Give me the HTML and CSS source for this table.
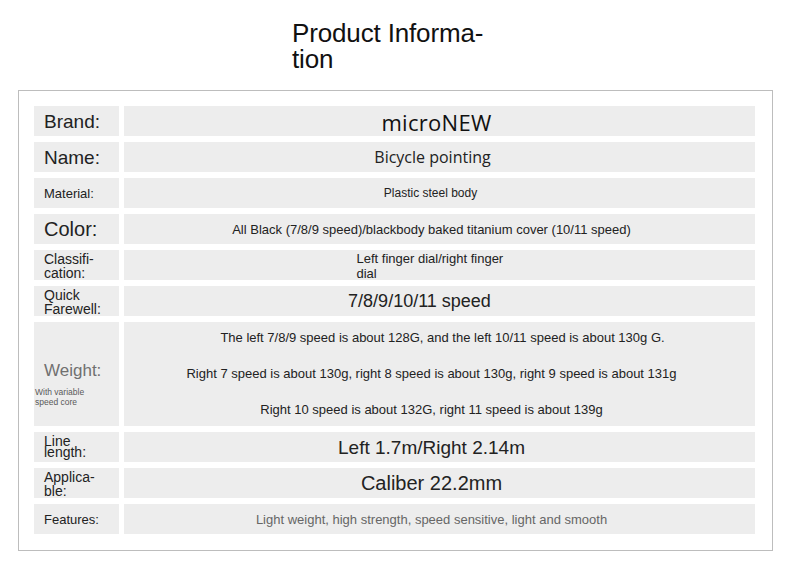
FILE: index.html
```html
<!DOCTYPE html>
<html>
<head>
<meta charset="utf-8">
<link rel="stylesheet" href="styles.css">
</head>
<body>
<h1 class="title">Product Informa-<br>tion</h1>
<div class="box">
  <div class="grid">
    <div class="lab lab-xl">Brand:</div>
    <div class="val val-brand">microNEW</div>

    <div class="lab lab-xl">Name:</div>
    <div class="val val-name">Bicycle pointing</div>

    <div class="lab lab-s">Material:</div>
    <div class="val val-xs">Plastic steel body</div>

    <div class="lab lab-xxl">Color:</div>
    <div class="val val-s">All Black (7/8/9 speed)/blackbody baked titanium cover (10/11 speed)</div>

    <div class="lab lab-m">Classifi-<br>cation:</div>
    <div class="val val-top"><div class="narrow">Left finger dial/right finger dial</div></div>

    <div class="lab lab-m">Quick<br>Farewell:</div>
    <div class="val val-l val-quick">7/8/9/10/11 speed</div>

    <div class="lab lab-weight">
      <div class="weight-main">Weight:</div>
      <div class="weight-sub">With variable<br>speed core</div>
    </div>
    <div class="val val-weight">
      <div class="w-first">The left 7/8/9 speed is about 128G, and the left 10/11 speed is about 130g G.</div>
      <div>Right 7 speed is about 130g, right 8 speed is about 130g, right 9 speed is about 131g</div>
      <div>Right 10 speed is about 132G, right 11 speed is about 139g</div>
    </div>

    <div class="lab lab-m lab-tight">Line<br>length:</div>
    <div class="val val-line">Left 1.7m/Right 2.14m</div>

    <div class="lab lab-m">Applica-<br>ble:</div>
    <div class="val val-xl">Caliber 22.2mm</div>

    <div class="lab lab-s lab-mid">Features:</div>
    <div class="val val-s val-gray">Light weight, high strength, speed sensitive, light and smooth</div>
  </div>
</div>
</body>
</html>
```
FILE: styles.css
```css
html, body {
  margin: 0;
  padding: 0;
  background: #ffffff;
}
body {
  font-family: "Liberation Sans", Arial, sans-serif;
  color: #1e1e1e;
  width: 790px;
}
.title {
  font-weight: normal;
  font-size: 26px;
  line-height: 26px;
  margin: 20px 0 0 292px;
  color: #111;
  letter-spacing: -0.15px;
}
.box {
  margin: 18px 0 0 18px;
  width: 755px;
  box-sizing: border-box;
  border: 1px solid #bdbdbd;
  padding: 15px 16px 16px 15px;
}
.grid {
  display: grid;
  grid-template-columns: 85px 631px;
  column-gap: 5px;
  row-gap: 6px;
  grid-template-rows: repeat(6, 30px) 104px repeat(3, 30px);
}
.lab, .val {
  background: #ededed;
}
.lab {
  padding-left: 10px;
  display: flex;
  flex-direction: column;
  justify-content: center;
  color: #222;
}
.lab-xl { font-size: 19px; padding-top: 2px; }
.lab-xxl { font-size: 20px; padding-top: 1px; }
.lab-s { font-size: 13px; }
.lab-m {
  font-size: 14px;
  line-height: 14px;
  justify-content: flex-start;
  padding-top: 2px;
}
.lab-tight {
  line-height: 11px;
  padding-top: 4px;
}
.lab-weight {
  padding-left: 0;
  align-items: stretch;
}
.weight-main {
  font-size: 17px;
  color: #707070;
  padding-left: 10px;
  margin-top: 20px;
}
.weight-sub {
  font-size: 8.5px;
  line-height: 9.5px;
  color: #5a5a5a;
  padding-left: 1px;
  margin-top: 7px;
}
.val {
  display: flex;
  align-items: center;
  justify-content: center;
  padding-right: 16px;
  text-align: center;
  color: #222;
}
.val-brand {
  font-family: "Open Sans", sans-serif;
  font-size: 22px;
  letter-spacing: 0.3px;
  padding-right: 6px;
  padding-top: 2px;
  color: #111;
}
.val-name {
  font-family: "Open Sans", sans-serif;
  font-size: 16px;
  padding-right: 14px;
}
.val-xs { font-size: 12px; padding-right: 18px; }
.val-s { font-size: 13px; }
.val-l { font-size: 18px; }
.val-line { font-size: 19px; padding-top: 2px; }
.val-xl { font-size: 20px; }
.val-quick { padding-right: 40px; }
.val-gray { color: #666; }
.val-top {
  align-items: flex-start;
}
.narrow {
  width: 156px;
  text-align: left;
  font-size: 13px;
  line-height: 15px;
  padding-top: 1px;
  padding-left: 6px;
}
.val-weight {
  flex-direction: column;
  justify-content: flex-start;
  font-size: 13px;
  line-height: 16px;
  gap: 20px;
  padding-top: 8px;
}
.w-first { padding-left: 22px; }
```
